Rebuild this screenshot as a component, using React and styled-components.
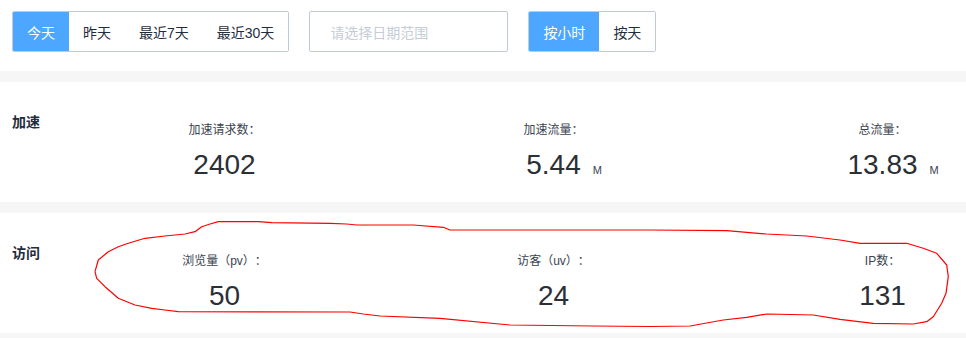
import React from "react";
import styled, { createGlobalStyle } from "styled-components";

const GlobalStyle = createGlobalStyle`
  html, body { margin: 0; padding: 0; background: #f6f6f6; overflow: hidden; }
  body { font-family: "Liberation Sans", "Noto Sans CJK SC", Arial, sans-serif; color: #1f2d3d; text-spacing-trim: space-all; }
`;

const Page = styled.div`
  position: relative;
  width: 966px;
  height: 338px;
  overflow: hidden;
  background: #f6f6f6;
`;

const Toolbar = styled.div`
  display: flex;
  align-items: center;
  gap: 20px;
  padding: 11px 12px 19px;
  background: #fff;
`;

const Group = styled.div`
  display: flex;
  border: 1px solid #bfcbd9;
  border-radius: 2px;
  height: 39px;
  overflow: hidden;
`;

const SegButton = styled.button`
  border: none;
  margin: 0;
  padding: 0 14px;
  height: 39px;
  font-family: "Liberation Sans", "Noto Sans CJK SC", sans-serif;
  font-size: 14px;
  background: ${(p) => (p.$active ? "#4da6ff" : "#fff")};
  color: ${(p) => (p.$active ? "#fff" : "#1f2d3d")};
  cursor: pointer;
  white-space: nowrap;
`;

const DateInput = styled.div`
  box-sizing: border-box;
  width: 199px;
  height: 41px;
  border: 1px solid #bfcbd9;
  border-radius: 2px;
  padding-left: 20px;
  display: flex;
  align-items: center;
  font-size: 14px;
  color: #c5cdd8;
`;

const Card = styled.section`
  margin-top: 11px;
  background: #fff;
  height: 120px;
  box-sizing: border-box;
  padding-top: 30px;
  display: grid;
  grid-template-columns: 60px repeat(3, 329px);
  align-items: start;
`;

const SectionTitle = styled.div`
  padding-left: 12px;
  font-size: 14px;
  line-height: 20px;
  font-weight: 700;
  color: #1f2d3d;
  white-space: nowrap;
`;

const Stat = styled.div`
  padding-top: 10px;
  display: flex;
  flex-direction: column;
  align-items: center;
`;

const StatLabel = styled.div`
  font-size: 12px;
  line-height: 16px;
  color: #3a4350;
  white-space: nowrap;
  text-spacing-trim: space-all;
`;

const ValueRow = styled.div`
  margin-top: 11px;
  width: 100%;
  display: grid;
  grid-template-columns: 1fr auto 1fr;
  align-items: baseline;
`;

const Value = styled.span`
  grid-column: 2;
  font-family: "Liberation Sans", Arial, sans-serif;
  font-size: 28px;
  line-height: 32px;
  color: #2b2f36;
`;

const Unit = styled.span`
  grid-column: 3;
  padding-left: 12px;
  font-family: "Liberation Sans", Arial, sans-serif;
  font-size: 11px;
  color: #3a4350;
`;

const Annotation = styled.svg`
  position: absolute;
  left: 0;
  top: 0;
  pointer-events: none;
`;

const ring = [
  [95, 271.7], [98.3, 260], [108.3, 251.7], [118.3, 246.7], [128.3, 243.3],
  [145, 238.3], [165, 236], [185, 234], [195, 231.7], [201.7, 226.7],
  [210, 224], [218.3, 221.7], [258.3, 221.7], [271.7, 222.7], [330, 223.3],
  [346.7, 224], [356.7, 225], [413.3, 225], [443.3, 227.3], [450, 230],
  [650, 230], [726.7, 230.7], [766.7, 234], [806.7, 236], [840, 240],
  [860, 243.3], [906.7, 243.3], [923.3, 248.3], [936.7, 253.3], [946.7, 265],
  [948.3, 276.7], [946, 293.3], [941.7, 303.3], [933.3, 316.7], [926.7, 321.7],
  [913.3, 324], [873.3, 323.3], [840, 319.3], [813.3, 315], [766.7, 314],
  [746.7, 317.3], [723.3, 320], [690, 326], [650, 326.5], [593.3, 326],
  [510, 325], [440, 318.3], [380, 316], [363.3, 314], [350, 312],
  [178.3, 311.7], [165, 310], [151.7, 308.3], [135, 305], [118.3, 298.3],
  [105, 286.7], [96.7, 278.3], [95, 271.7],
];

const sections = [
  {
    title: "加速",
    stats: [
      { label: "加速请求数：", value: "2402" },
      { label: "加速流量：", value: "5.44", unit: "M" },
      { label: "总流量：", value: "13.83", unit: "M" },
    ],
  },
  {
    title: "访问",
    stats: [
      { label: "浏览量（pv）：", value: "50" },
      { label: "访客（uv）：", value: "24" },
      { label: "IP数：", value: "131" },
    ],
  },
];

export default function App() {
  return (
    <>
      <GlobalStyle />
      <Page>
        <Toolbar>
          <Group>
            <SegButton $active>今天</SegButton>
            <SegButton>昨天</SegButton>
            <SegButton>最近7天</SegButton>
            <SegButton>最近30天</SegButton>
          </Group>
          <DateInput>请选择日期范围</DateInput>
          <Group>
            <SegButton $active>按小时</SegButton>
            <SegButton>按天</SegButton>
          </Group>
        </Toolbar>
        {sections.map((s) => (
          <Card key={s.title}>
            <SectionTitle>{s.title}</SectionTitle>
            {s.stats.map((st) => (
              <Stat key={st.label}>
                <StatLabel>{st.label}</StatLabel>
                <ValueRow>
                  <Value>{st.value}</Value>
                  {st.unit && <Unit>{st.unit}</Unit>}
                </ValueRow>
              </Stat>
            ))}
          </Card>
        ))}
        <Annotation width="966" height="338" viewBox="0 0 966 338">
          <polyline
            points={ring.map((p) => p.join(",")).join(" ")}
            fill="none"
            stroke="#ff0000"
            strokeWidth="1.2"
            strokeLinejoin="round"
          />
        </Annotation>
      </Page>
    </>
  );
}
